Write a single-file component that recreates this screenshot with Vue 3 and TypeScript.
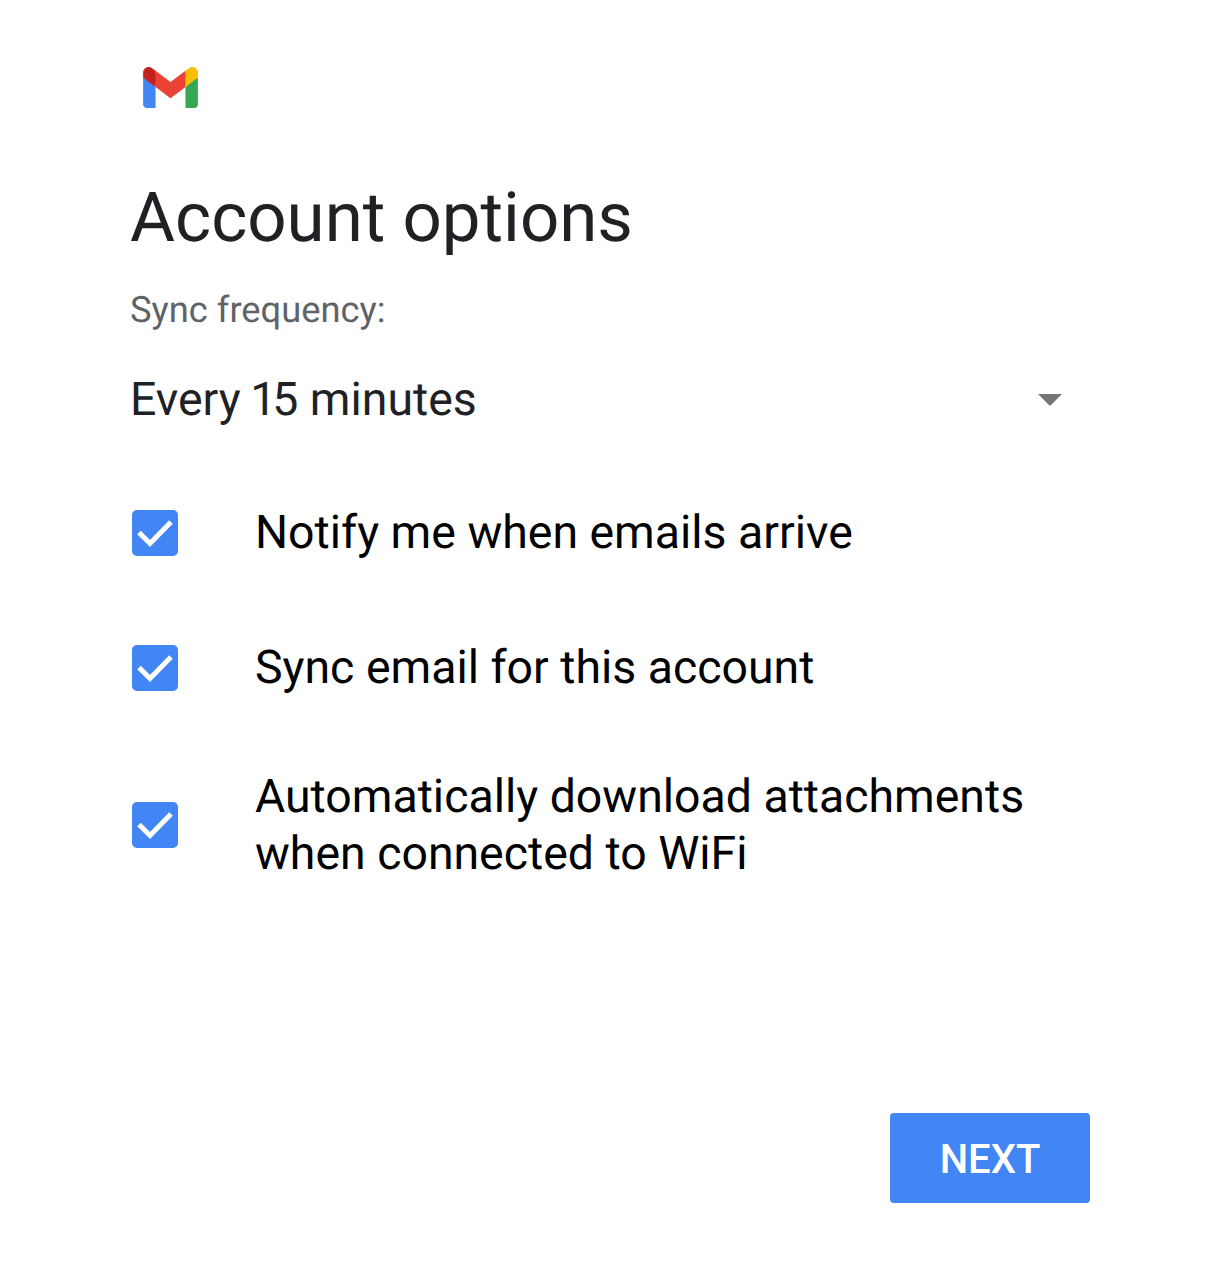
<script setup lang="ts">
const options = [
  { id: 'notify', lines: ['Notify me when emails arrive'] },
  { id: 'sync', lines: ['Sync email for this account'] },
  { id: 'auto', lines: ['Automatically download attachments', 'when connected to WiFi'] },
]
</script>

<template>
  <main class="page">
    <svg class="logo" width="55" height="41.300" viewBox="0 0 256 193" aria-label="Gmail">
      <path fill="#4285f4" d="M58.182 192.050V93.140L27.507 65.077 0 49.504v125.091c0 9.658 7.825 17.455 17.455 17.455h40.727Z" />
      <path fill="#34a853" d="M197.818 192.050h40.727c9.658 0 17.455-7.826 17.455-17.455V49.505l-31.156 17.837-27.026 25.798v98.910Z" />
      <path fill="#ea4335" d="m58.182 93.140-4.174-38.647 4.174-36.989L128 69.868l69.818-52.364 4.669 34.992-4.669 40.644L128 145.504z" />
      <path fill="#fbbc04" d="M197.818 17.504V93.140L256 49.504V26.231c0-21.585-24.640-33.890-41.890-20.945l-16.292 12.218Z" />
      <path fill="#c5221f" d="M0 49.504l26.759 20.070L58.182 93.140V17.504L41.890 5.286C24.610-7.660 0 4.646 0 26.230v23.273Z" />
    </svg>
    <h1 class="title">Account options</h1>
    <div class="label">Sync frequency:</div>
    <div class="select">
      <span>Every 15 minutes</span>
      <span class="caret"></span>
    </div>
    <ul class="options">
      <li v-for="o in options" :key="o.id" class="option" :class="{ multi: o.lines.length > 1 }">
        <span class="box">
          <svg width="46" height="46" viewBox="0 0 46 46">
            <path d="M7 22.500l11 11 21-21.500" fill="none" stroke="#fff" stroke-width="5" />
          </svg>
        </span>
        <span class="text"><span v-for="l in o.lines" :key="l" class="line">{{ l }}</span></span>
      </li>
    </ul>
    <div class="actions"><button class="next">NEXT</button></div>
  </main>
</template>

<style scoped>
.page {
  box-sizing: border-box;
  width: 1220px;
  height: 1266px;
  padding: 67px 130px 0 130px;
  font-family: Roboto, sans-serif;
  background: #fff;
  display: flex;
  flex-direction: column;
  text-rendering: geometricPrecision;
}
.logo { margin-left: 13px; display: block; flex: none; }
.title {
  margin: 68px 0 0;
  font-size: 69px;
  line-height: 84px;
  font-weight: 400;
  color: #202124;
}
.label {
  margin-top: 27px;
  font-size: 36.300px;
  line-height: 46px;
  color: #5f6368;
}
.select {
  margin-top: 38px;
  display: flex;
  justify-content: space-between;
  align-items: center;
  font-size: 46.400px;
  line-height: 58px;
  font-variant-numeric: proportional-nums;
  color: #202124;
  padding-right: 28px;
}
.caret {
  width: 0;
  height: 0;
  border-left: 12px solid transparent;
  border-right: 12px solid transparent;
  border-top: 12px solid #757575;
}
.options { list-style: none; margin: 37px 0 0; padding: 0; }
.option {
  display: flex;
  align-items: center;
  min-height: 135px;
  font-size: 46.400px;
  line-height: 57px;
  color: #000;
}
.option.multi { min-height: 179px; }
.box {
  width: 46px;
  height: 46px;
  margin: 0 77px 2px 2px;
  border-radius: 5px;
  background: #4285f4;
  flex: none;
  display: block;
}
.box svg { display: block; }
.line { display: block; }
.actions { margin-top: auto; padding-bottom: 63px; display: flex; justify-content: flex-end; }
.next {
  width: 200px;
  height: 90px;
  padding: 3px 0 0;
  border: 0;
  border-radius: 4px;
  background: #4285f4;
  color: #fff;
  font: 500 40px Roboto, sans-serif;
}
</style>
